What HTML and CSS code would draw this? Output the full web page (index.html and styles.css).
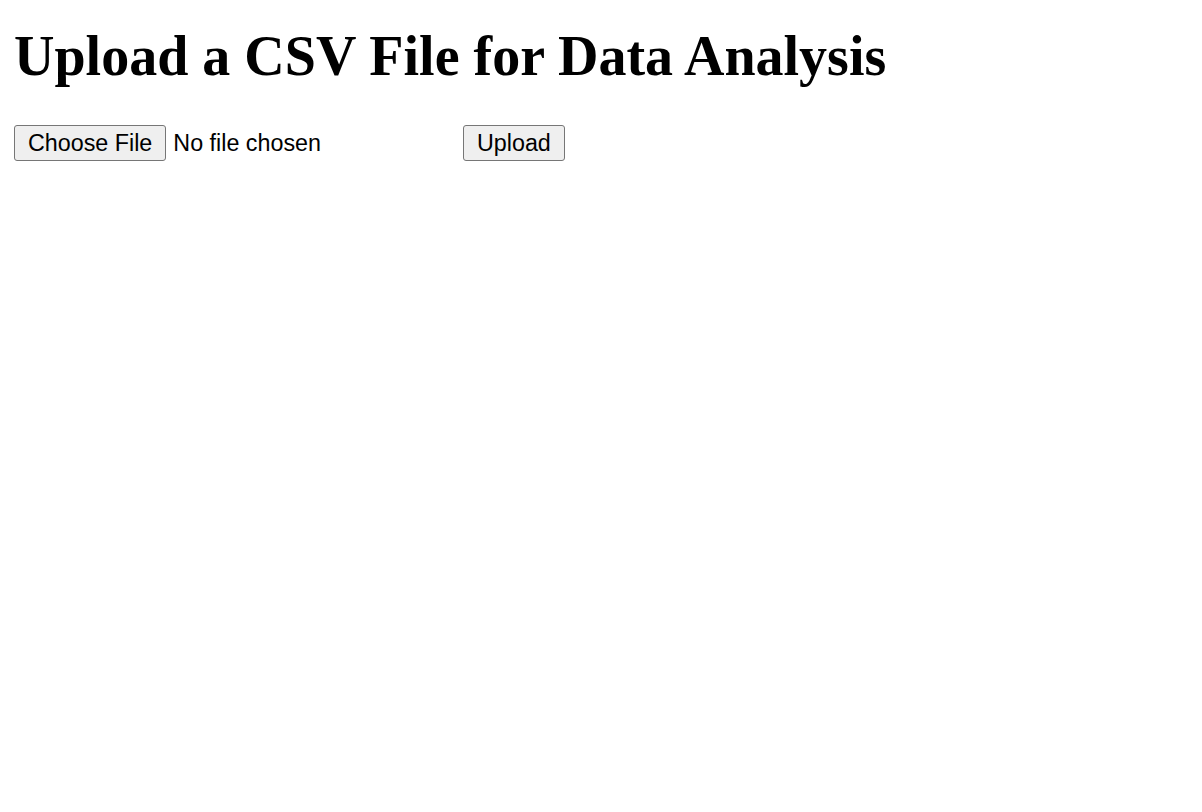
FILE: index.html
```html
<!DOCTYPE html>
<html>
<head>
<meta charset="utf-8">
<title>Upload CSV</title>
<link rel="stylesheet" href="styles.css">
</head>
<body class="page">
<h1 class="title">Upload a CSV File for Data Analysis</h1>
<form class="upload-form">
  <input class="file-input" type="file" name="file" accept=".csv">
  <button class="btn" type="submit">Upload</button>
</form>
</body>
</html>
```

FILE: styles.css
```css
.page {
  margin: 14px;
  background: #fff;
  color: #000;
  font-family: "Liberation Serif", "Times New Roman", serif;
}
.title {
  font-size: 56px;
  font-weight: bold;
  margin: 10px 0 37px;
  line-height: 1.15;
}
.upload-form {
  display: flex;
  align-items: center;
  gap: 7px;
  margin: 0;
}
.file-input {
  width: 442px;
  font-family: "Liberation Sans", Arial, sans-serif;
  font-size: 23.3px;
  color: #000;
}
.file-input::file-selector-button,
.btn {
  font-family: "Liberation Sans", Arial, sans-serif;
  font-size: 23.3px;
  color: #000;
  background: #efefef;
  border: 1px solid #767676;
  border-radius: 3px;
  padding: 2px 13px;
  height: 36px;
  margin: 0 7px 0 0;
}
.btn {
  margin: 0;
}
```
